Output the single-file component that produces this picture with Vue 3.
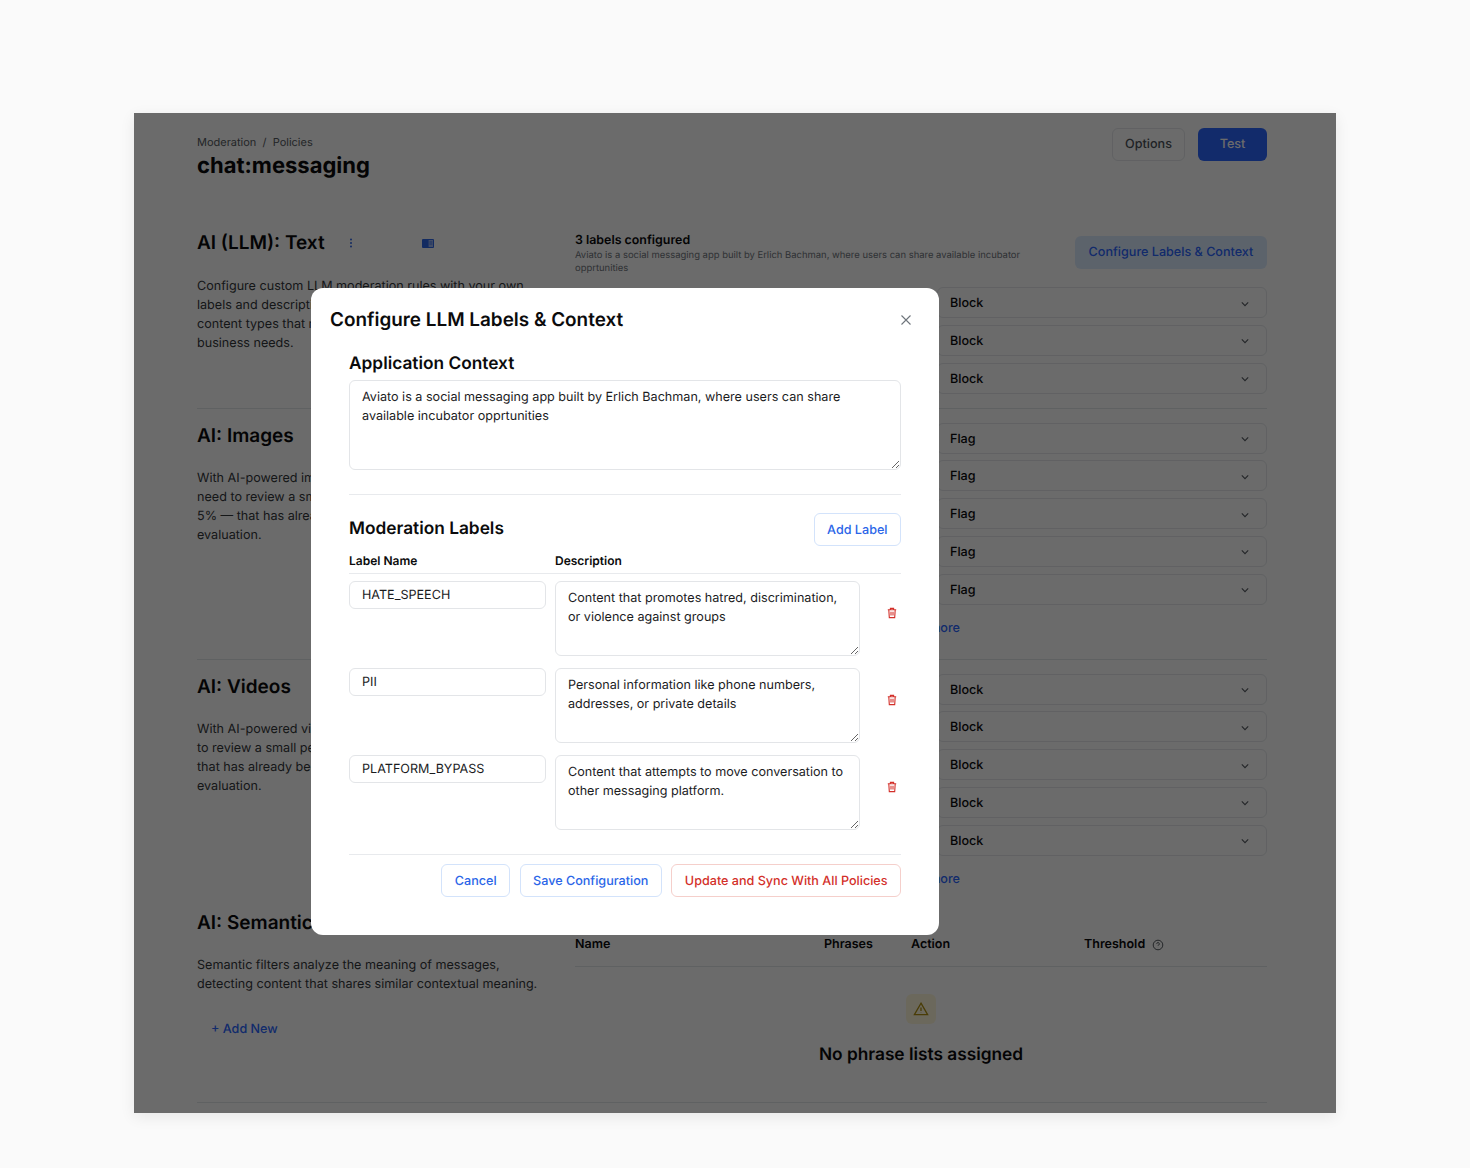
<script setup>
const llmText = 'Configure custom LLM moderation rules with your own\nlabels and descriptions to flag the specific\ncontent types that matter most to your\nbusiness needs.'
const semanticText = 'Semantic filters analyze the meaning of messages,\ndetecting content that shares similar contextual meaning.'

const sections = [
  {
    title: 'AI: Images',
    text: 'With AI-powered image moderation, you only\nneed to review a small percentage of content —\n5% — that has already been flagged for further\nevaluation.',
    action: 'Flag',
    rows: ['Nudity', 'Violence', 'Drugs', 'Weapons', 'Hate Symbols']
  },
  {
    title: 'AI: Videos',
    text: 'With AI-powered video moderation, you only need\nto review a small percentage of content — 5% —\nthat has already been flagged for further\nevaluation.',
    action: 'Block',
    rows: ['Nudity', 'Violence', 'Drugs', 'Weapons', 'Hate Symbols']
  }
]

const textRows = ['HATE_SPEECH', 'PII', 'PLATFORM_BYPASS']

const labels = [
  { name: 'HATE_SPEECH', description: 'Content that promotes hatred, discrimination, or violence against groups' },
  { name: 'PII', description: 'Personal information like phone numbers, addresses, or private details' },
  { name: 'PLATFORM_BYPASS', description: 'Content that attempts to move conversation to other messaging platform.' }
]

const context = 'Aviato is a social messaging app built by Erlich Bachman, where users can share available incubator opprtunities'
</script>

<template>
  <div class="page">
    <div class="frame">
      <div class="content">
        <header class="top">
          <div>
            <div class="crumbs">Moderation&nbsp; /&nbsp; Policies</div>
            <h1>chat:messaging</h1>
          </div>
          <div class="top-actions">
            <button class="btn-options">Options</button>
            <button class="btn-test">Test</button>
          </div>
        </header>

        <section class="section first">
          <div class="left">
            <div class="title-row">
              <h2>AI (LLM): Text</h2>
              <svg class="kebab" width="4" height="10" viewBox="0 0 4 10"><circle cx="2" cy="1.5" r="1" /><circle cx="2" cy="5" r="1" /><circle cx="2" cy="8.5" r="1" /></svg>
              <svg class="book" width="12" height="9" viewBox="0 0 12 9"><rect width="12" height="9" rx="1" fill="#2f66e8" /><rect x="6.6" y="1" width="4.4" height="7" fill="#9db8f2" /><path d="M7.4 3h3M7.4 5h3" stroke="#2f66e8" stroke-width=".8" /></svg>
            </div>
            <p>{{ llmText }}</p>
          </div>
          <div class="right">
            <div class="config">
              <div class="config-text">
                <strong>3 labels configured</strong>
                <small>{{ context }}</small>
              </div>
              <button class="btn-config">Configure Labels &amp; Context</button>
            </div>
            <div class="row" v-for="row in textRows" :key="row">
              <span class="row-name">{{ row }}</span>
              <div class="select">
                <span>Block</span>
                <svg width="10" height="10" viewBox="0 0 10 10"><path d="M1.8 3.4 5 6.6l3.2-3.2" /></svg>
              </div>
            </div>
          </div>
        </section>

        <section class="section media" v-for="s in sections" :key="s.title">
          <div class="left">
            <div class="title-row"><h2>{{ s.title }}</h2></div>
            <p>{{ s.text }}</p>
          </div>
          <div class="right">
            <div class="row" v-for="row in s.rows" :key="row">
              <span class="row-name">{{ row }}</span>
              <div class="select">
                <span>{{ s.action }}</span>
                <svg width="10" height="10" viewBox="0 0 10 10"><path d="M1.8 3.4 5 6.6l3.2-3.2" /></svg>
              </div>
            </div>
            <div class="more">Show 12 more</div>
          </div>
        </section>

        <section class="section last">
          <div class="left">
            <div class="title-row"><h2>AI: Semantic Filters</h2></div>
            <p>{{ semanticText }}</p>
            <button class="btn-add">+ Add New</button>
          </div>
          <div class="right">
            <div class="phrase-head">
              <span class="c-name">Name</span>
              <span class="c-phrases">Phrases</span>
              <span class="c-action">Action</span>
              <span class="c-threshold">Threshold
                <svg width="12" height="12" viewBox="0 0 12 12"><circle cx="6" cy="6" r="4.8" /><path d="M4.7 4.8a1.3 1.3 0 1 1 1.9 1.2c-.4.2-.6.4-.6.9M6 8.6v.1" /></svg>
              </span>
            </div>
            <div class="empty">
              <div class="warn">
                <svg width="16" height="16" viewBox="0 0 16 16"><path d="M8 2.2 14.6 13.6H1.4Z" /><path d="M8 6.4v3.6M8 11.6v.2" /></svg>
              </div>
              <div class="empty-text">No phrase lists assigned</div>
            </div>
          </div>
        </section>
      </div>

      <div class="overlay"></div>

      <div class="modal">
        <div class="modal-head">
          <h3>Configure LLM Labels &amp; Context</h3>
          <svg class="close" width="12" height="12" viewBox="0 0 12 12"><path d="M1.5 1.5l9 9M10.5 1.5l-9 9" /></svg>
        </div>
        <div class="modal-body">
          <h4 class="context-title">Application Context</h4>
          <textarea class="context" :value="context"></textarea>
          <div class="divider"></div>
          <div class="labels-head">
            <h4>Moderation Labels</h4>
            <button class="btn-blue add">Add Label</button>
          </div>
          <div class="table-head">
            <span class="col-name">Label Name</span>
            <span>Description</span>
          </div>
          <div class="label-row" v-for="label in labels" :key="label.name">
            <input class="col-name name-input" :value="label.name" />
            <textarea class="desc" :value="label.description"></textarea>
            <svg class="trash" width="12" height="12" viewBox="0 0 12 12">
              <path d="M1.8 2.8h8.4M4.4 2.6V1.4h3.2v1.2M2.8 2.8l.5 7.8h5.4l.5-7.8M5 4.8v3.8M7 4.8v3.8" />
            </svg>
          </div>
          <div class="divider foot-line"></div>
          <div class="foot">
            <button class="btn-blue">Cancel</button>
            <button class="btn-blue">Save Configuration</button>
            <button class="btn-red">Update and Sync With All Policies</button>
          </div>
        </div>
      </div>
    </div>
  </div>
</template>

<style scoped>
* {
  box-sizing: border-box;
  text-rendering: geometricPrecision;
}

.page {
  height: 1168px;
  padding: 113px 134px 55px;
  background: #fafafa;
  font-family: Inter, "Liberation Sans", sans-serif;
  color: #0b0b0c;
}

.frame {
  position: relative;
  height: 1000px;
  overflow: hidden;
  background: #fff;
  box-shadow: 0 4px 14px rgba(0, 0, 0, .08);
}

.content {
  padding: 15px 69px 0 63px;
}

.overlay {
  position: absolute;
  inset: 0;
  background: rgba(0, 0, 0, .58);
}

.top {
  display: flex;
  justify-content: space-between;
  height: 104px;
}

.crumbs {
  margin-top: 7px;
  font-size: 11px;
  line-height: 14px;
  color: #555a60;
}

h1 {
  margin: 2px 0 0;
  font-size: 22px;
  line-height: 30px;
  font-weight: 700;
}

.top-actions {
  display: flex;
  gap: 13px;
}

button {
  padding-top: 1px;
  font-family: inherit;
  font-size: 12.6px;
  font-weight: 500;
  border-radius: 6px;
  cursor: pointer;
}

.btn-options {
  width: 73px;
  height: 33px;
  border: 1px solid #e6e8eb;
  background: #fff;
  color: #4b5158;
}

.btn-test {
  width: 69px;
  height: 33px;
  border: 0;
  background: #2b66ff;
  color: #fff;
}

.section {
  display: grid;
  grid-template-columns: 378px 1fr;
  padding: 14px 0 16px;
  border-bottom: 1px solid #e3e6ea;
}

.section.first {
  padding: 0 0 14px;
}

.section.media:nth-of-type(3) {
  padding-bottom: 0;
  border-bottom: 0;
}

.section.last {
  height: 209px;
  padding-top: 16px;
}

.title-row {
  display: flex;
  align-items: center;
  height: 26px;
  margin-bottom: 20px;
}

.section.first .title-row {
  margin-top: -2px;
  margin-bottom: 21px;
}

h2 {
  margin: 0;
  font-size: 19px;
  line-height: 26px;
  font-weight: 600;
}

.kebab {
  margin-left: 24px;
  fill: #2f66e8;
}

.book {
  margin-left: 69px;
}

.left p {
  width: 360px;
  margin: 0;
  font-size: 12.6px;
  line-height: 19px;
  color: #33373b;
  white-space: pre-line;
}

.config {
  display: flex;
  justify-content: space-between;
  height: 55px;
}

.config-text {
  width: 460px;
}

.config-text strong {
  display: block;
  font-size: 12.4px;
  line-height: 15px;
  font-weight: 600;
}

.config-text small {
  display: block;
  margin-top: 2px;
  font-size: 9.45px;
  line-height: 13px;
  color: #70767d;
}

.btn-config {
  width: 192px;
  height: 33px;
  margin-top: 4px;
  padding-top: 0;
  border: 0;
  background: #dcecff;
  color: #2b66ff;
}

.row {
  display: flex;
  align-items: center;
  justify-content: space-between;
  height: 31px;
  margin-bottom: 6.75px;
  font-size: 12.6px;
}

.row:last-of-type {
  margin-bottom: 0;
}

.select {
  display: flex;
  align-items: center;
  justify-content: space-between;
  width: 330px;
  height: 31px;
  padding: 2px 16px 0 12px;
  border: 1px solid #e6e8eb;
  border-radius: 6px;
  background: #fff;
  font-size: 12.6px;
  font-weight: 500;
}

.select svg {
  fill: none;
  stroke: #555a60;
  stroke-width: 1.1;
}

.more {
  width: 385px;
  margin-top: 14px;
  padding-bottom: 4px;
  font-size: 12.6px;
  line-height: 20px;
  font-weight: 500;
  text-align: right;
  color: #2b66ff;
}

.btn-add {
  display: block;
  margin-top: 25px;
  padding: 1px 14px 0;
  height: 20px;
  border: 0;
  background: none;
  color: #2b66ff;
}

.phrase-head {
  display: flex;
  align-items: center;
  height: 57px;
  padding-top: 14px;
  border-bottom: 1px solid #e3e6ea;
  font-size: 12.5px;
  font-weight: 600;
}

.c-name { width: 249px; }
.c-phrases { width: 87px; }
.c-action { width: 173px; }

.c-threshold {
  display: flex;
  align-items: center;
  gap: 7px;
}

.c-threshold svg {
  fill: none;
  stroke: #555a60;
  stroke-width: 1;
}

.empty {
  display: flex;
  flex-direction: column;
  align-items: center;
  padding-top: 27px;
}

.warn {
  display: flex;
  align-items: center;
  justify-content: center;
  width: 30px;
  height: 30px;
  border-radius: 6px;
  background: #fff8dc;
}

.warn svg {
  fill: none;
  stroke: #b0900f;
  stroke-width: 1.3;
}

.empty-text {
  margin-top: 19px;
  font-size: 17.3px;
  line-height: 24px;
  font-weight: 600;
}

.modal {
  position: absolute;
  left: 177px;
  top: 175px;
  width: 628px;
  height: 647px;
  padding: 0 38px;
  border-radius: 12px;
  background: #fff;
}

.modal-head {
  display: flex;
  align-items: center;
  justify-content: space-between;
  height: 62px;
  margin: 0 -11px 0 -19px;
}

h3 {
  margin: 2px 0 0;
  font-size: 18.9px;
  line-height: 26px;
  font-weight: 600;
}

.close {
  margin-top: 1px;
  fill: none;
  stroke: #6e747b;
  stroke-width: 1.1;
}

h4 {
  margin: 0;
  font-size: 17.3px;
  line-height: 26px;
  font-weight: 600;
}

.context-title {
  margin-top: 1px;
}

textarea,
input {
  display: block;
  font-family: inherit;
  font-size: 12.6px;
  color: #1b1c1e;
  background: #fff;
  border: 1px solid #e3e5e8;
  border-radius: 6px;
  outline: none;
}

textarea {
  line-height: 19px;
  padding: 7px 12px 6px;
}

.context {
  width: 100%;
  height: 90px;
  margin-top: 3px;
}

.divider {
  height: 1px;
  background: #e8eaed;
}

.context + .divider {
  margin-top: 24px;
}

.labels-head {
  display: flex;
  align-items: center;
  justify-content: space-between;
  height: 33px;
  margin-top: 18px;
}

.labels-head h4 {
  margin-bottom: 1px;
}

.btn-blue,
.btn-red {
  height: 33px;
  padding: 1px 12.5px 0;
  background: #fff;
}

.btn-blue {
  border: 1px solid #d3e3fb;
  color: #2b66e8;
}

.btn-red {
  border: 1px solid #f5cfcb;
  color: #d3302a;
}

.table-head {
  display: flex;
  align-items: center;
  height: 28px;
  padding-top: 2px;
  margin-bottom: -5px;
  border-bottom: 1px solid #e8eaed;
  font-size: 12px;
  font-weight: 600;
}

.col-name {
  width: 197px;
  margin-right: 9px;
  flex-shrink: 0;
}

.label-row {
  display: flex;
  align-items: flex-start;
  height: 75px;
  margin-top: 12px;
}

.name-input {
  height: 28px;
  padding: 0 12px;
}

.desc {
  width: 305px;
  height: 75px;
}

.trash {
  margin: 26px 0 0 26px;
  fill: none;
  stroke: #d3302a;
  stroke-width: 1.1;
}

.foot-line {
  margin-top: 24px;
}

.foot {
  display: flex;
  justify-content: flex-end;
  gap: 9.5px;
  margin-top: 9px;
}
</style>
